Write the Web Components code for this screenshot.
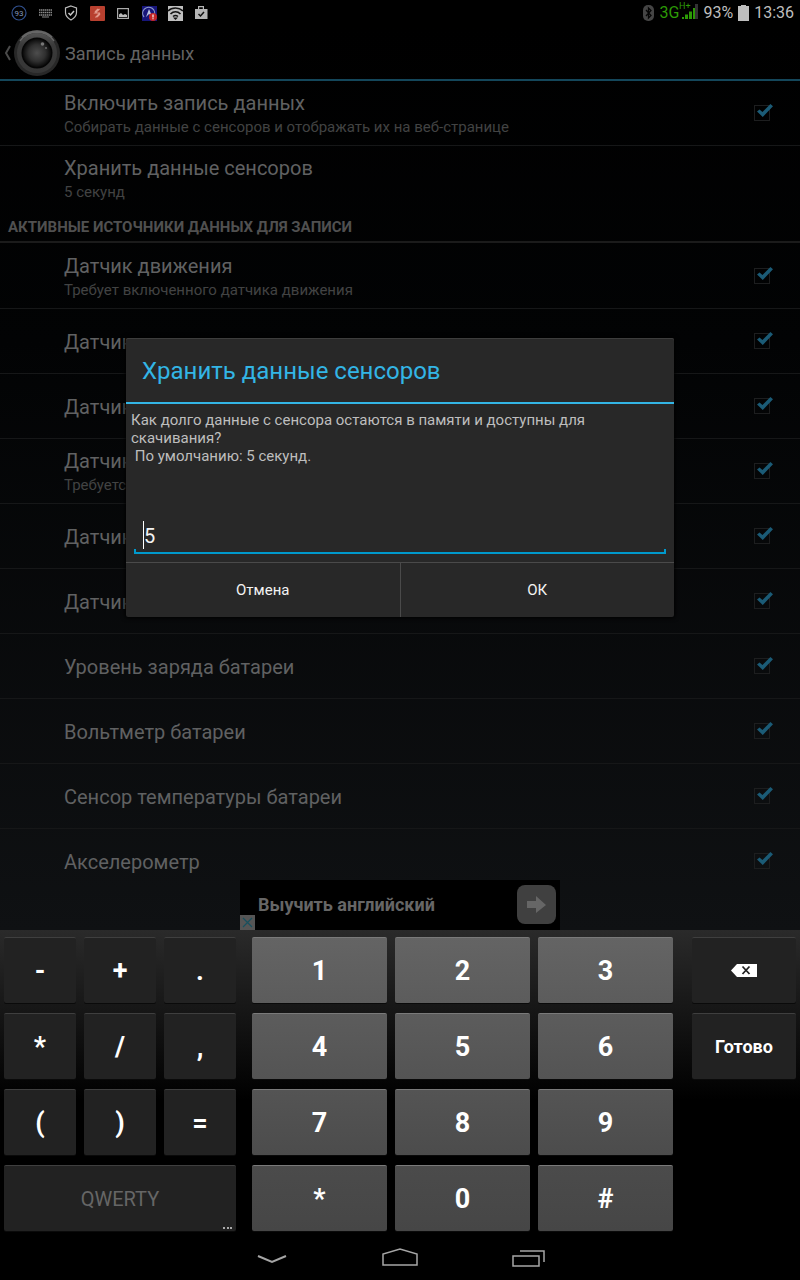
<!DOCTYPE html>
<html lang="ru">
<head>
<meta charset="utf-8">
<meta name="viewport" content="width=device-width, initial-scale=1">
<title>Запись данных</title>
<style>
  body {
    margin: 0;
    min-height: 100vh;
    display: flex;
    flex-direction: column;
    background: #000;
    font-family: Roboto, "Noto Sans", sans-serif;
  }
</style>
</head>
<body>
<status-bar></status-bar>
<app-screen>
  <title-bar>Запись данных</title-bar>
  <pref-row checked>Включить запись данных<span slot="summary">Собирать данные с сенсоров и отображать их на веб-странице</span></pref-row>
  <pref-row plain>Хранить данные сенсоров<span slot="summary">5 секунд</span></pref-row>
  <pref-category>АКТИВНЫЕ ИСТОЧНИКИ ДАННЫХ ДЛЯ ЗАПИСИ</pref-category>
  <pref-row checked>Датчик движения<span slot="summary">Требует включенного датчика движения</span></pref-row>
  <pref-row checked>Датчик</pref-row>
  <pref-row checked>Датчик</pref-row>
  <pref-row checked>Датчик<span slot="summary">Требуется</span></pref-row>
  <pref-row checked>Датчик</pref-row>
  <pref-row checked>Датчик</pref-row>
  <pref-row checked>Уровень заряда батареи</pref-row>
  <pref-row checked>Вольтметр батареи</pref-row>
  <pref-row checked>Сенсор температуры батареи</pref-row>
  <pref-row checked last>Акселерометр</pref-row>
  <ad-banner slot="ad">Выучить английский</ad-banner>
  <edit-dialog slot="dialog" value="5">
    <span slot="title">Хранить данные сенсоров</span>Как долго данные с сенсора остаются в памяти и доступны для скачивания?
 По умолчанию: 5 секунд.</edit-dialog>
</app-screen>
<number-keyboard></number-keyboard>
<nav-bar></nav-bar>

<script>
function define(name, html, init) {
  const template = document.createElement("template");
  template.innerHTML = html;
  customElements.define(name, class extends HTMLElement {
    constructor() {
      super();
      this.attachShadow({ mode: "open" });
      this.shadowRoot.append(template.content.cloneNode(true));
    }
    connectedCallback() {
      if (init) init.call(this, this.shadowRoot);
    }
  });
}

define("status-bar", `
  <style>
    :host {
      display: flex;
      justify-content: space-between;
      align-items: center;
      height: 25px;
      padding: 0 6px 0 11px;
      background: #000;
      color: #bebebe;
      font-size: 16px;
      line-height: 25px;
    }
    div { display: flex; align-items: center; }
    .left { gap: 10px; }
    .right { gap: 5px; }
    svg { display: block; }
    .net { display: flex; color: #2c9a06; }
    .signal { font-size: 9px; }
  </style>
  <div class="left">
    <svg width="16" height="16" viewBox="0 0 16 16"><circle cx="8" cy="8" r="7" fill="none" stroke="#31518f" stroke-width="1.200"/><text x="8" y="11" font-size="8" text-anchor="middle" fill="#8096bd">93</text></svg>
    <svg width="16" height="16" viewBox="0 0 16 16"><path d="M2 5h13M2 7.500h13M2 10h13" stroke="#8a8a8a" stroke-width="1.700" stroke-dasharray="1.500 .5"/><path d="M5 12h7" stroke="#8a8a8a"/></svg>
    <svg width="16" height="16" viewBox="0 0 16 16"><path d="M8 1l5.500 2v4.500c0 3.500-2.300 5.700-5.500 7.500c-3.200-1.800-5.500-4-5.500-7.500V3z" fill="none" stroke="#bbb" stroke-width="1.200"/><path d="M5.500 8l2 2 3.500-4" fill="none" stroke="#ccc" stroke-width="1.500"/></svg>
    <svg width="16" height="16" viewBox="0 0 16 16"><rect x="1" y="1" width="15" height="15" rx="1" fill="#b8402f"/><path d="M10.500 4L6 8h5M11 8l-4.500 4.500M6 7l3-3M8 12l3-3" fill="none" stroke="#e39a8c" stroke-width="1.200"/></svg>
    <svg width="16" height="16" viewBox="0 0 16 16"><rect x="2.600" y="3.600" width="10.800" height="9.800" fill="none" stroke="#aaa" stroke-width="1.200"/><path d="M4 12V9.500l2-1.500 2 2 2-1 2 1v2z" fill="#bbb"/></svg>
    <svg width="16" height="16" viewBox="0 0 16 16"><rect x="1" y="1" width="15" height="15" fill="#17157a"/><path d="M3 12a6 6 0 1 1 10-1" fill="none" stroke="#8d9cc8" stroke-width="1.200"/><path d="M8 4l3 7-3-2-3 3z" fill="#bcc4e0"/><circle cx="12" cy="12" r="4" fill="#c32627"/><path d="M12 9.500v3M12 13.200v1" stroke="#eee" stroke-width="1.300"/></svg>
    <svg width="16" height="16" viewBox="0 0 16 16"><path d="M1 1h15v15H1z" fill="#bfbfbf"/><path d="M1 6c4-4 11-4 15 0M3.500 9c3-3 7-3 10 0M6 11.500c2-1.600 3-1.600 5 0" fill="none" stroke="#111" stroke-width="1.600"/><path d="M6 12.500h5L8.500 15z" fill="#111"/></svg>
    <svg width="16" height="16" viewBox="0 0 16 16"><path d="M2 4h3V1h6v3h3.500v10H2zM6.200 2.200V4h3.600V2.200z" fill="#b5b5b5" fill-rule="evenodd"/><path d="M5.500 9l2 2 3.500-4" fill="none" stroke="#111" stroke-width="1.500"/></svg>
  </div>
  <div class="right">
    <svg width="13" height="18" viewBox="0 0 13 18"><rect x="1" y="1" width="11" height="16" rx="5" fill="#454545"/><path d="M4 6l5 5.500-2.500 2.500V4L9 6.500 4 12" fill="none" stroke="#050505" stroke-width="1.300"/></svg>
    <span class="net">3G<svg class="signal" width="19" height="25" viewBox="0 0 19 25"><path d="M16 4h3v15h-3z" fill="#333"/><text x="0" y="9" fill="#2c9a06">H+</text><path d="M3 17h2v2H3zM6 14.500h3V19H6zM10 11.500h3V19h-3zM14 8h2v11h-2z" fill="#2c9a06"/></svg></span>
    <span>93%</span>
    <svg width="11" height="16" viewBox="0 0 11 16"><path d="M3 0h5v1h3v15H0V1h3z" fill="#bebebe"/></svg>
    <span>13:36</span>
  </div>
`);

define("app-screen", `
  <style>
    :host {
      position: relative;
      display: block;
      flex: 1;
      background: linear-gradient(#000 0%, #020304 35%, #0f1113 100%);
    }
    .over {
      position: absolute;
      inset: 0;
      display: flex;
      justify-content: center;
      align-items: center;
    }
    .bottom { align-items: flex-end; }
  </style>
  <slot></slot>
  <div class="over bottom"><slot name="ad"></slot></div>
  <div class="over"><slot name="dialog"></slot></div>
`);

define("title-bar", `
  <style>
    :host {
      display: flex;
      align-items: center;
      box-sizing: border-box;
      height: 56px;
      padding: 2px 0 0 4px;
      border-bottom: 2px solid #14475b;
      color: #646464;
      font-size: 18px;
    }
    svg { display: block; margin-right: 4px; }
  </style>
  <svg width="57" height="48" viewBox="0 0 57 48">
    <defs>
      <radialGradient id="glass"><stop offset="0" stop-color="#4d4d4d"/><stop offset=".6" stop-color="#303030"/><stop offset="1" stop-color="#0b0b0b"/></radialGradient>
      <linearGradient id="ring" x2="0" y2="1"><stop offset="0" stop-color="#555"/><stop offset=".3" stop-color="#3a3a3a"/><stop offset="1" stop-color="#363636"/></linearGradient>
    </defs>
    <path d="M6 17L2 24l4 7" fill="none" stroke="#4a4a4a" stroke-width="2"/>
    <circle cx="33" cy="24" r="23" fill="#282828"/>
    <circle cx="33" cy="24" r="20" fill="url(#ring)"/>
    <path d="M16 12A21 21 0 0 1 50 12M18 8A22 22 0 0 1 48 8" fill="none" stroke="#666" stroke-width="1.500"/>
    <circle cx="33" cy="24" r="15.500" fill="#060606"/>
    <circle cx="33" cy="24" r="14" fill="url(#glass)"/>
    <circle cx="38.500" cy="15" r="1.800" fill="#777"/><circle cx="42" cy="19" r="1.100" fill="#666"/>
  </svg>
  <slot></slot>
`);

define("pref-row", `
  <style>
    :host { display: block; }
    label {
      display: flex;
      align-items: center;
      box-sizing: border-box;
      min-height: 65px;
      padding: 0 30px 0 64px;
      border-bottom: 1px solid #161718;
    }
    :host([plain]) label, :host([last]) label { border-color: transparent; }
    .text { flex: 1; min-width: 0; padding-top: 2px; }
    .title { color: #606162; font-size: 20px; line-height: 26px; }
    .summary { display: block; color: #424343; font-size: 15px; line-height: 22px; }
    input {
      position: relative;
      appearance: none;
      box-sizing: border-box;
      width: 16px;
      height: 16px;
      margin: 0;
      border: 1px solid #1d1e1f;
    }
    input:checked::after {
      content: "";
      position: absolute;
      left: 2px;
      top: -2px;
      width: 16px;
      height: 13px;
      background: #1b5b76;
      clip-path: polygon(0 57%, 16% 43%, 34% 62%, 84% 0, 100% 18%, 36% 100%);
    }
  </style>
  <label>
    <span class="text"><span class="title"><slot></slot></span><span class="summary"><slot name="summary"></slot></span></span>
    <input type="checkbox">
  </label>
`, function (root) {
  const input = root.querySelector("input");
  if (this.hasAttribute("plain")) input.remove();
  input.checked = this.hasAttribute("checked");
  if (!this.querySelector("[slot=summary]")) root.querySelector(".summary").remove();
});

define("pref-category", `
  <style>
    :host {
      display: block;
      margin-bottom: 1px;
      padding: 2px 8px 0;
      border-bottom: 2px solid #1b1b1b;
      color: #505050;
      font-size: 15px;
      font-weight: 700;
      line-height: 28px;
    }
  </style>
  <slot></slot>
`);

define("ad-banner", `
  <style>
    :host {
      display: flex;
      justify-content: space-between;
      align-items: center;
      box-sizing: border-box;
      position: relative;
      width: 320px;
      height: 50px;
      padding: 0 4px 2px 18px;
      background: #000;
      color: #666;
      font-size: 18px;
      font-weight: 700;
    }
    button { padding: 0; border: 0; }
    svg { display: block; }
    .go { width: 39px; height: 39px; border-radius: 8px; background: #404040; }
    .close { position: absolute; left: 0; bottom: 0; width: 15px; height: 15px; background: #555; }
  </style>
  <slot></slot>
  <button class="go" aria-label="Перейти"><svg width="39" height="39" viewBox="0 0 39 39"><path d="M10 16h9v-5l10 9-10 8v-5h-9z" fill="#666"/></svg></button>
  <button class="close" aria-label="Закрыть"><svg width="15" height="15" viewBox="0 0 15 15"><path d="M3 3l9 9M12 3l-9 9" stroke="#17505e" stroke-width="1.200"/></svg></button>
`);

define("edit-dialog", `
  <style>
    :host {
      display: block;
      width: 548px;
      max-width: 90%;
      background: #282828;
      border-radius: 2px;
      box-shadow: 0 0 4px 1px #000, inset 0 1px #3d3d3d;
    }
    h2 {
      margin: 0;
      padding: 2px 16px 0;
      border-bottom: 2px solid #33b5e5;
      color: #33b5e5;
      font-size: 24px;
      font-weight: 400;
      line-height: 62px;
    }
    p {
      margin: 0;
      padding: 7px 5px;
      min-height: 90px;
      color: #bebebe;
      font-size: 15px;
      line-height: 18px;
      white-space: pre-wrap;
    }
    .field {
      display: flex;
      align-items: center;
      box-sizing: border-box;
      height: 46px;
      margin: 0 8px 8px;
      padding: 10px 8px 0;
      border-bottom: 2px solid #0099cc;
      background:
        linear-gradient(#0099cc, #0099cc) left bottom / 2px 3px no-repeat,
        linear-gradient(#0099cc, #0099cc) right bottom / 2px 3px no-repeat;
    }
    .caret { width: 1px; height: 28px; margin-left: 1px; background: #fff; }
    input {
      flex: 1;
      min-width: 0;
      padding: 2px 0 0;
      border: 0;
      outline: 0;
      background: none;
      color: #f3f3f3;
      font: 20px Roboto, sans-serif;
    }
    .buttons { display: flex; border-top: 1px solid #4a4a4a; }
    button {
      flex: 1;
      height: 54px;
      padding: 0;
      border: 0;
      background: none;
      color: #f3f3f3;
      font: 15px Roboto, sans-serif;
    }
    button:first-child { border-right: 1px solid #4a4a4a; }
  </style>
  <h2 id="title"><slot name="title"></slot></h2>
  <p><slot></slot></p>
  <div class="field"><span class="caret"></span><input type="text" inputmode="numeric" aria-labelledby="title"></div>
  <div class="buttons"><button>Отмена</button><button>ОК</button></div>
`, function (root) {
  root.querySelector("input").value = this.getAttribute("value");
  // drop the indentation around the title so the message starts at its first word
  this.childNodes.forEach(node => {
    if (node.nodeType === Node.TEXT_NODE && !node.data.trim()) node.data = "";
  });
});

define("key-button", `
  <style>
    :host { display: block; }
    button {
      display: flex;
      justify-content: center;
      align-items: center;
      position: relative;
      width: 100%;
      height: 66px;
      padding: 0;
      border: 0;
      border-top: 1px solid #3f3f3f;
      border-radius: 2px;
      background: #222;
      box-shadow: 0 1px #0a0a0a;
      color: #fff;
      font: 700 27px Roboto, sans-serif;
    }
    :host([kind=digit]) button {
      border-color: #7a7a7a;
      background: var(--face, #555);
    }
    :host([kind=done]) button { font-size: 18px; }
    :host([kind=mode]) button { color: #666; font-size: 20px; font-weight: 400; }
    .dots { display: none; position: absolute; right: 4px; bottom: 2px; }
    :host([kind=mode]) .dots { display: block; }
  </style>
  <button><slot></slot><svg class="dots" width="9" height="2" viewBox="0 0 9 2"><path d="M0 0h2v2H0zM4 0h2v2H4zM7 0h2v2H7z" fill="#aaa"/></svg></button>
`);

define("number-keyboard", `
  <style>
    :host {
      display: flex;
      padding: 7px 4px 4px;
      background: linear-gradient(#2a2a2a, #000 170px);
    }
    div { display: grid; gap: 10px 8px; align-content: start; }
    .signs { flex: 232 1 0; grid-template-columns: repeat(3, 1fr); margin-right: 16px; }
    .digits { flex: 421 1 0; grid-template-columns: repeat(3, 1fr); margin-right: 19px; }
    .actions { flex: 104 1 0; }
    .wide { grid-column: span 3; }
    svg { display: block; }
  </style>
  <div class="signs"></div>
  <div class="digits"></div>
  <div class="actions">
    <key-button><svg width="26" height="13" viewBox="0 0 26 13" role="img" aria-label="Удалить"><path d="M6 0h20v13H6L0 6.500z" fill="#fff"/><path d="M11.500 2.500l7 7.500M18.500 2.500l-7 7.500" stroke="#222" stroke-width="1.800"/></svg></key-button>
    <key-button kind="done">Готово</key-button>
  </div>
`, function (root) {
  const addKey = (box, text, kind, face) => {
    const key = document.createElement("key-button");
    key.textContent = text;
    if (kind) key.setAttribute("kind", kind);
    if (face) key.style.setProperty("--face", face);
    root.querySelector(box).append(key);
    return key;
  };
  for (const sign of "-+.*/,()=") addKey(".signs", sign);
  addKey(".signs", "QWERTY", "mode").classList.add("wide");

  const faces = [
    "linear-gradient(#646464, #5c5c5c)",
    "linear-gradient(#5c5c5c, #545454)",
    "linear-gradient(#545454, #4c4c4c)",
    "linear-gradient(#4b4b4b, #464646)"
  ];
  [..."123456789*0#"].forEach((digit, i) => addKey(".digits", digit, "digit", faces[Math.floor(i / 3)]));
});

define("nav-bar", `
  <style>
    :host {
      display: flex;
      justify-content: center;
      gap: 64px;
      box-sizing: border-box;
      height: 45px;
      padding-bottom: 2px;
      background: #000;
    }
    button { width: 64px; padding: 0; border: 0; background: none; }
    svg { display: block; margin: 0 auto; fill: none; stroke: #a6a6a6; stroke-width: 2; }
  </style>
  <button aria-label="Назад"><svg width="36" height="20" viewBox="0 0 36 20"><path d="M4 9l14 6 14-6"/></svg></button>
  <button aria-label="Домой"><svg width="36" height="20" viewBox="0 0 36 20"><path d="M1 18V7l17-5 17 5v11z" stroke-width="1.500"/></svg></button>
  <button aria-label="Недавние"><svg width="36" height="20" viewBox="0 0 36 20"><path d="M3 9h26v10H3zM10 4h24v11" stroke-width="1.500"/></svg></button>
`);
</script>
</body>
</html>
